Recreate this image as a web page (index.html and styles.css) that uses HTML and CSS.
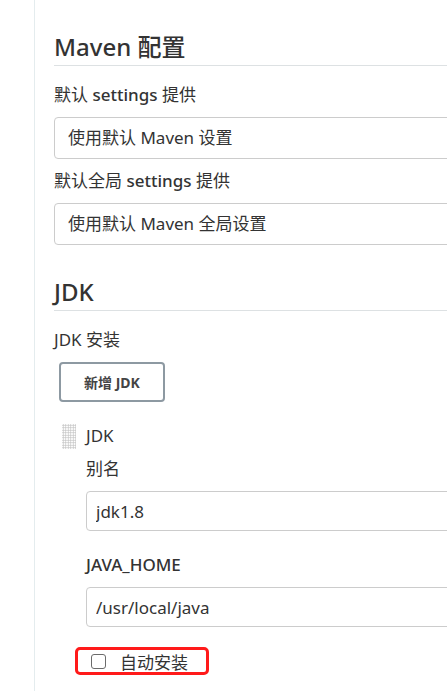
FILE: index.html
```html
<!DOCTYPE html>
<html lang="zh-CN">
<head>
    <meta charset="UTF-8">
    <meta name="viewport" content="width=device-width, initial-scale=1.0">
    <title>Maven 配置</title>
    <link rel="stylesheet" href="styles.css">
</head>
<body>
    <div class="page">
        <div class="side"></div>
        <div class="content">
            <section class="section">
                <h2 class="section-title">Maven 配置</h2>
                <div class="form-label">默认 <span class="latin">settings</span> 提供</div>
                <div class="select">使用默认 Maven 设置</div>
                <div class="form-label">默认全局 <span class="latin">settings</span> 提供</div>
                <div class="select">使用默认 Maven 全局设置</div>
            </section>

            <section class="section">
                <h2 class="section-title">JDK</h2>
                <div class="form-label">JDK 安装</div>
                <button class="add-button">新增 JDK</button>

                <div class="repeated">
                    <div class="handle"></div>
                    <div class="repeated-body">
                        <div class="repeated-title">JDK</div>
                        <div class="form-label">别名</div>
                        <input class="field" type="text" value="jdk1.8">
                        <div class="form-label strong">JAVA_HOME</div>
                        <input class="field" type="text" value="/usr/local/java">
                        <label class="auto-install">
                            <input type="checkbox" class="check">
                            <span>自动安装</span>
                        </label>
                    </div>
                </div>
            </section>
        </div>
    </div>
</body>
</html>
```

FILE: styles.css
```css
body {
    margin: 0;
    font-family: "Noto Sans", "Noto Sans CJK SC", sans-serif;
    color: #333;
    background: #fff;
    overflow: hidden;
}

.page {
    display: flex;
    min-height: 691px;
}

.side {
    width: 34px;
    flex-shrink: 0;
    border-right: 1px solid #e4ecee;
}

.content {
    flex: 1;
    padding-left: 19px;
    min-width: 0;
    overflow: hidden;
}

.section {
    padding-top: 31px;
}

.section-title {
    margin: 0;
    font-size: 24px;
    font-weight: 500;
    line-height: 32px;
    padding-bottom: 2px;
    border-bottom: 1px solid #dde1e3;
}

.form-label {
    font-size: 17px;
    line-height: 22px;
    margin-top: 11px;
}

.section-title + .form-label {
    margin-top: 18px;
}

.latin {
    font-weight: 500;
}

.select {
    margin-top: 11px;
    height: 42px;
    box-sizing: border-box;
    width: calc(100% + 30px);
    border: 1px solid #ccc;
    border-radius: 4px;
    padding-left: 13px;
    font-size: 17px;
    line-height: 40px;
}

.add-button {
    display: block;
    margin: 11px 0 0 5px;
    width: 106px;
    height: 40px;
    background: #fff;
    border: 2px solid #8d99a2;
    border-radius: 4px;
    font-family: inherit;
    font-size: 14px;
    font-weight: 700;
    color: #444;
    cursor: pointer;
}

.repeated {
    display: flex;
    gap: 10px;
    margin: 21px 0 0 8px;
}

.handle {
    width: 14px;
    height: 25px;
    flex-shrink: 0;
    margin-top: 1px;
    background-image: radial-gradient(circle, #c4c4c4 0.8px, transparent 1px);
    background-size: 2.5px 2.5px;
}

.repeated-body {
    flex: 1;
    min-width: 0;
}

.repeated-title {
    font-size: 17px;
    line-height: 22px;
    margin-top: 2px;
}

.field {
    display: block;
    margin-top: 11px;
    height: 40px;
    box-sizing: border-box;
    width: calc(100% + 30px);
    border: 1px solid #ccc;
    border-radius: 4px;
    padding: 0 9px;
    font-family: inherit;
    font-size: 17px;
    color: #333;
}

.form-label.strong {
    margin-top: 23px;
    font-weight: 500;
}

.auto-install {
    display: inline-flex;
    align-items: center;
    gap: 14px;
    margin: 20px 0 0 -11px;
    height: 28px;
    box-sizing: border-box;
    padding: 0 18px 0 13px;
    border: 3px solid #ff1a1a;
    border-radius: 5px;
    font-size: 17px;
}

.check {
    appearance: none;
    margin: 0;
    width: 15px;
    height: 15px;
    border: 1px solid #6b6b6b;
    border-radius: 3px;
    background: #fff;
}
```
